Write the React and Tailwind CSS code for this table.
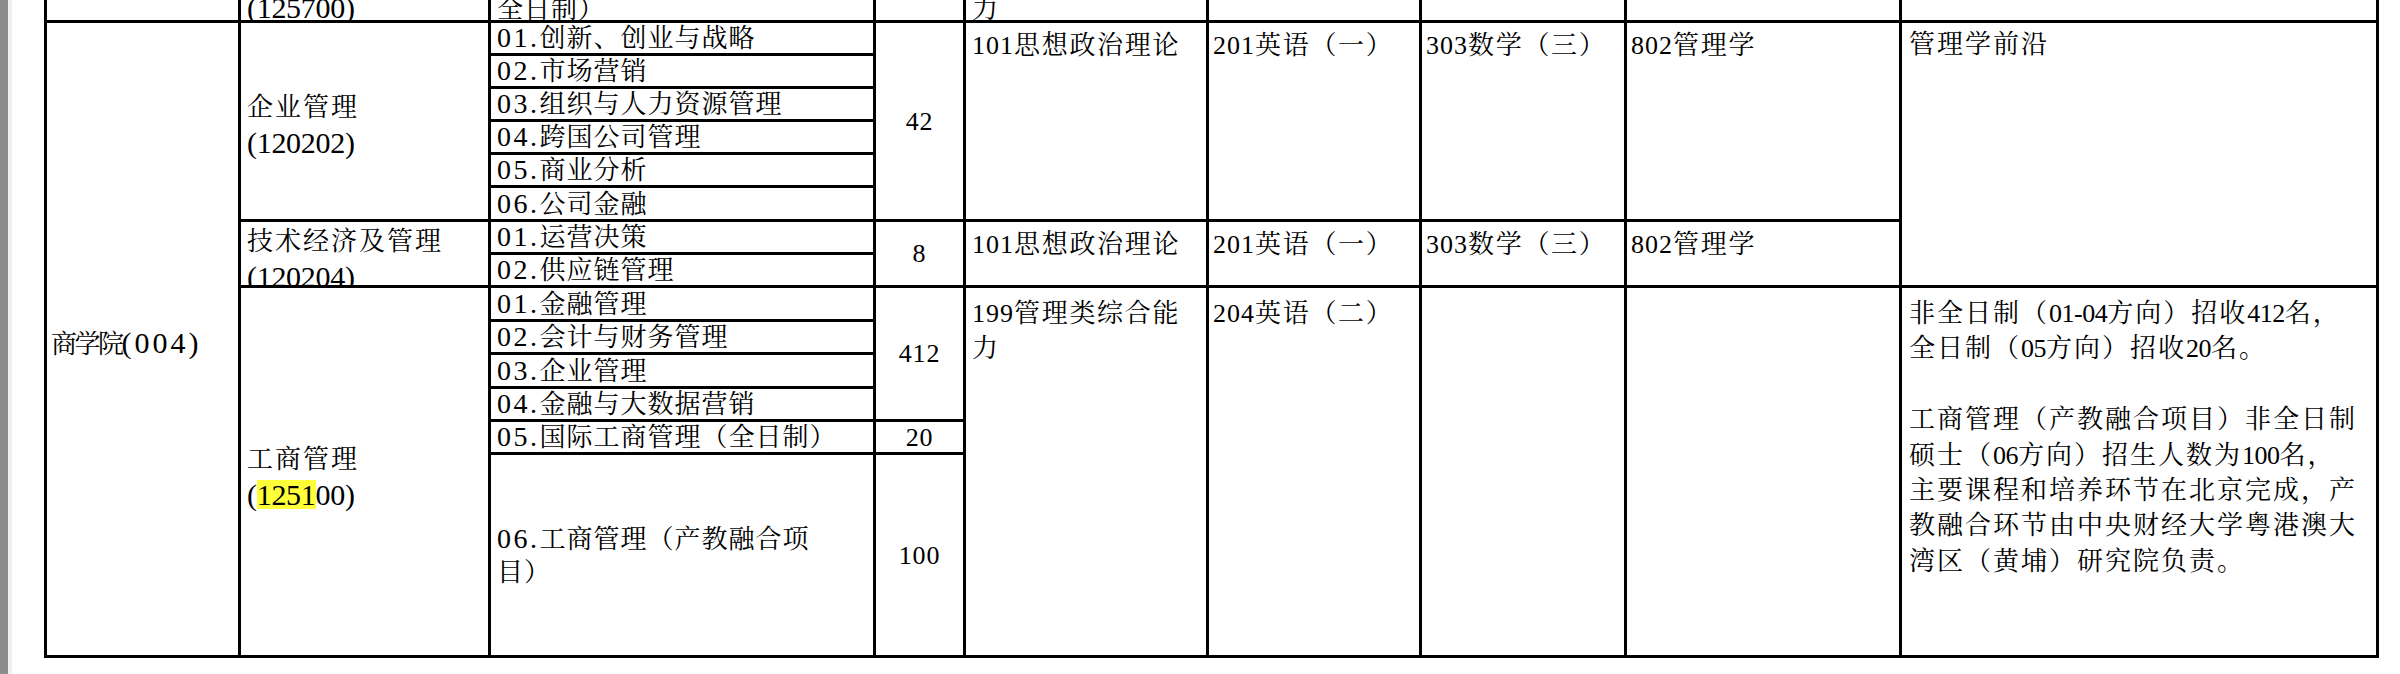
import React from "react";

const F = "font-['Liberation_Serif','Noto_Serif_CJK_SC','Noto_Sans_CJK_SC',serif]";
const B = "border-r-[3px] border-b-[3px] border-black overflow-hidden";

function T({ s, a }) {
  const parts = s.split(/([\x20-\x7e]+)/);
  return parts.map((p, i) =>
    i % 2 === 1 ? (
      <span key={i} className={a}>
        {p}
      </span>
    ) : (
      <React.Fragment key={i}>{p}</React.Fragment>
    )
  );
}

const subs = [
  ["row-start-2", ["01.创新、创业与战略"]],
  ["row-start-3", ["02.市场营销"]],
  ["row-start-4", ["03.组织与人力资源管理"]],
  ["row-start-5", ["04.跨国公司管理"]],
  ["row-start-6", ["05.商业分析"]],
  ["row-start-7", ["06.公司金融"]],
  ["row-start-8", ["01.运营决策"]],
  ["row-start-9", ["02.供应链管理"]],
  ["row-start-10", ["01.金融管理"]],
  ["row-start-11", ["02.会计与财务管理"]],
  ["row-start-12", ["03.企业管理"]],
  ["row-start-13", ["04.金融与大数据营销"]],
  ["row-start-14", ["05.国际工商管理（全日制）"]],
  ["row-start-15", ["06.工商管理（产教融合项", "目）"]],
];

const exams = [
  {
    row: "row-start-2 row-span-6 pt-[5px]",
    v: ["101思想政治理论", "201英语（一）", "303数学（三）", "802管理学"],
  },
  {
    row: "row-start-8 row-span-2 pt-[5px]",
    v: ["101思想政治理论", "201英语（一）", "303数学（三）", "802管理学"],
  },
  {
    row: "row-start-10 row-span-6 pt-[8px]",
    v: [["199管理类综合能", "力"], "204英语（二）", "", ""],
  },
];
const examCols = ["col-start-5 pl-[6px]", "col-start-6 pl-[4px]", "col-start-7 pl-[4px]", "col-start-8 pl-[4px]"];

const notes = [
  "非全日制（01-04方向）招收412名，",
  "全日制（05方向）招收20名。",
  "",
  "工商管理（产教融合项目）非全日制",
  "硕士（06方向）招生人数为100名，",
  "主要课程和培养环节在北京完成，产",
  "教融合环节由中央财经大学粤港澳大",
  "湾区（黄埔）研究院负责。",
];

export default function App() {
  return (
    <div className={`flex h-[674px] w-[2400px] overflow-hidden bg-white text-[26px] font-normal text-black ${F}`}>
      <div className="w-[8px] shrink-0 bg-[#8c8c8c]" />
      <div className="w-[4px] shrink-0 bg-[#efefef]" />
      <div className="ml-[32px] grid h-[658px] w-max shrink-0 grid-cols-[194px_250px_385px_90px_243px_213px_205px_275px_477px] grid-rows-[23px_33px_33px_33px_33px_33px_34px_33px_33px_34px_33px_34px_33px_33px_203px] border-l-[3px] border-black">
        {/* top partial row */}
        <div className={`${B} col-start-1 row-start-1`} />
        <div className={`${B} col-start-2 row-start-1 flex items-end pl-[6px] tracking-[2px]`}>
          <div className="mb-[-2px] whitespace-nowrap leading-[24px]">
            <T s="(125700)" a="text-[30px] tracking-[-0.3px]" />
          </div>
        </div>
        <div className={`${B} col-start-3 row-start-1 flex items-end pl-[6px] tracking-[1px]`}>
          <div className="mb-[-2px] whitespace-nowrap leading-[24px]">全日制）</div>
        </div>
        <div className={`${B} col-start-4 row-start-1`} />
        <div className={`${B} col-start-5 row-start-1 flex items-end pl-[6px]`}>
          <div className="mb-[-2px] whitespace-nowrap leading-[24px]">力</div>
        </div>
        <div className={`${B} col-start-6 row-start-1`} />
        <div className={`${B} col-start-7 row-start-1`} />
        <div className={`${B} col-start-8 row-start-1`} />
        <div className={`${B} col-start-9 row-start-1`} />

        {/* college */}
        <div className={`${B} col-start-1 row-start-2 row-span-14 flex items-center pl-[4px] pt-[8px] tracking-[-2.5px]`}>
          <div className="whitespace-nowrap leading-[35px]">
            <T s="商学院(004)" a="text-[30px] tracking-[3px]" />
          </div>
        </div>

        {/* majors */}
        <div className={`${B} col-start-2 row-start-2 row-span-6 flex items-center pl-[6px] pt-[9px] tracking-[2px]`}>
          <div className="whitespace-nowrap leading-[35px]">
            <div>企业管理</div>
            <div>
              <T s="(120202)" a="text-[30px] tracking-[-0.3px]" />
            </div>
          </div>
        </div>
        <div className={`${B} col-start-2 row-start-8 row-span-2 flex items-center pl-[6px] pt-[12px] tracking-[2px]`}>
          <div className="whitespace-nowrap leading-[35px]">
            <div>技术经济及管理</div>
            <div>
              <T s="(120204)" a="text-[30px] tracking-[-0.3px]" />
            </div>
          </div>
        </div>
        <div className={`${B} col-start-2 row-start-10 row-span-6 flex items-center pl-[6px] pt-[10px] tracking-[2px]`}>
          <div className="whitespace-nowrap leading-[35px]">
            <div>工商管理</div>
            <div className="text-[30px] tracking-[-0.3px]">
              <span>(</span>
              <span className="inline-block bg-[#ffff3a] leading-[29px]">1251</span>
              <span>00)</span>
            </div>
          </div>
        </div>

        {/* directions */}
        {subs.map(([r, lines]) => (
          <div key={r} className={`${B} col-start-3 ${r} flex items-center pl-[6px] tracking-[1px]`}>
            <div className="whitespace-nowrap leading-[33px]">
              {lines.map((l) => (
                <div key={l}>
                  <T s={l} a="text-[28px] tracking-[2.5px]" />
                </div>
              ))}
            </div>
          </div>
        ))}

        {/* counts */}
        <div className={`${B} col-start-4 row-start-2 row-span-6 flex items-center justify-center tracking-[0.8px]`}>
          <span className="leading-[35px]">42</span>
        </div>
        <div className={`${B} col-start-4 row-start-8 row-span-2 flex items-center justify-center tracking-[0.8px]`}>
          <span className="leading-[35px]">8</span>
        </div>
        <div className={`${B} col-start-4 row-start-10 row-span-4 flex items-center justify-center tracking-[0.8px]`}>
          <span className="leading-[35px]">412</span>
        </div>
        <div className={`${B} col-start-4 row-start-14 flex items-center justify-center tracking-[0.8px]`}>
          <span className="leading-[33px]">20</span>
        </div>
        <div className={`${B} col-start-4 row-start-15 flex items-center justify-center tracking-[0.8px]`}>
          <span className="leading-[35px]">100</span>
        </div>

        {/* exam subjects */}
        {exams.map((g, gi) =>
          g.v.map((val, ci) => (
            <div key={`${gi}-${ci}`} className={`${B} ${examCols[ci]} ${g.row} tracking-[1.7px]`}>
              <div className="whitespace-nowrap leading-[35px]">
                {(Array.isArray(val) ? val : val ? [val] : []).map((l) => (
                  <div key={l}>
                    <T s={l} a="tracking-[1px]" />
                  </div>
                ))}
              </div>
            </div>
          ))
        )}

        {/* remarks */}
        <div className={`${B} col-start-9 row-start-2 row-span-8 pl-[7px] pt-[4px] tracking-[2px]`}>
          <div className="whitespace-nowrap leading-[35px]">管理学前沿</div>
        </div>
        <div className={`${B} col-start-9 row-start-10 row-span-6 pl-[7px] pt-[8px] tracking-[2px]`}>
          <div className="whitespace-nowrap leading-[35.4px]">
            {notes.map((l, i) => (
              <div key={i} className="h-[35.4px]">
                <T s={l} a="tracking-[-0.5px]" />
              </div>
            ))}
          </div>
        </div>
      </div>
    </div>
  );
}
